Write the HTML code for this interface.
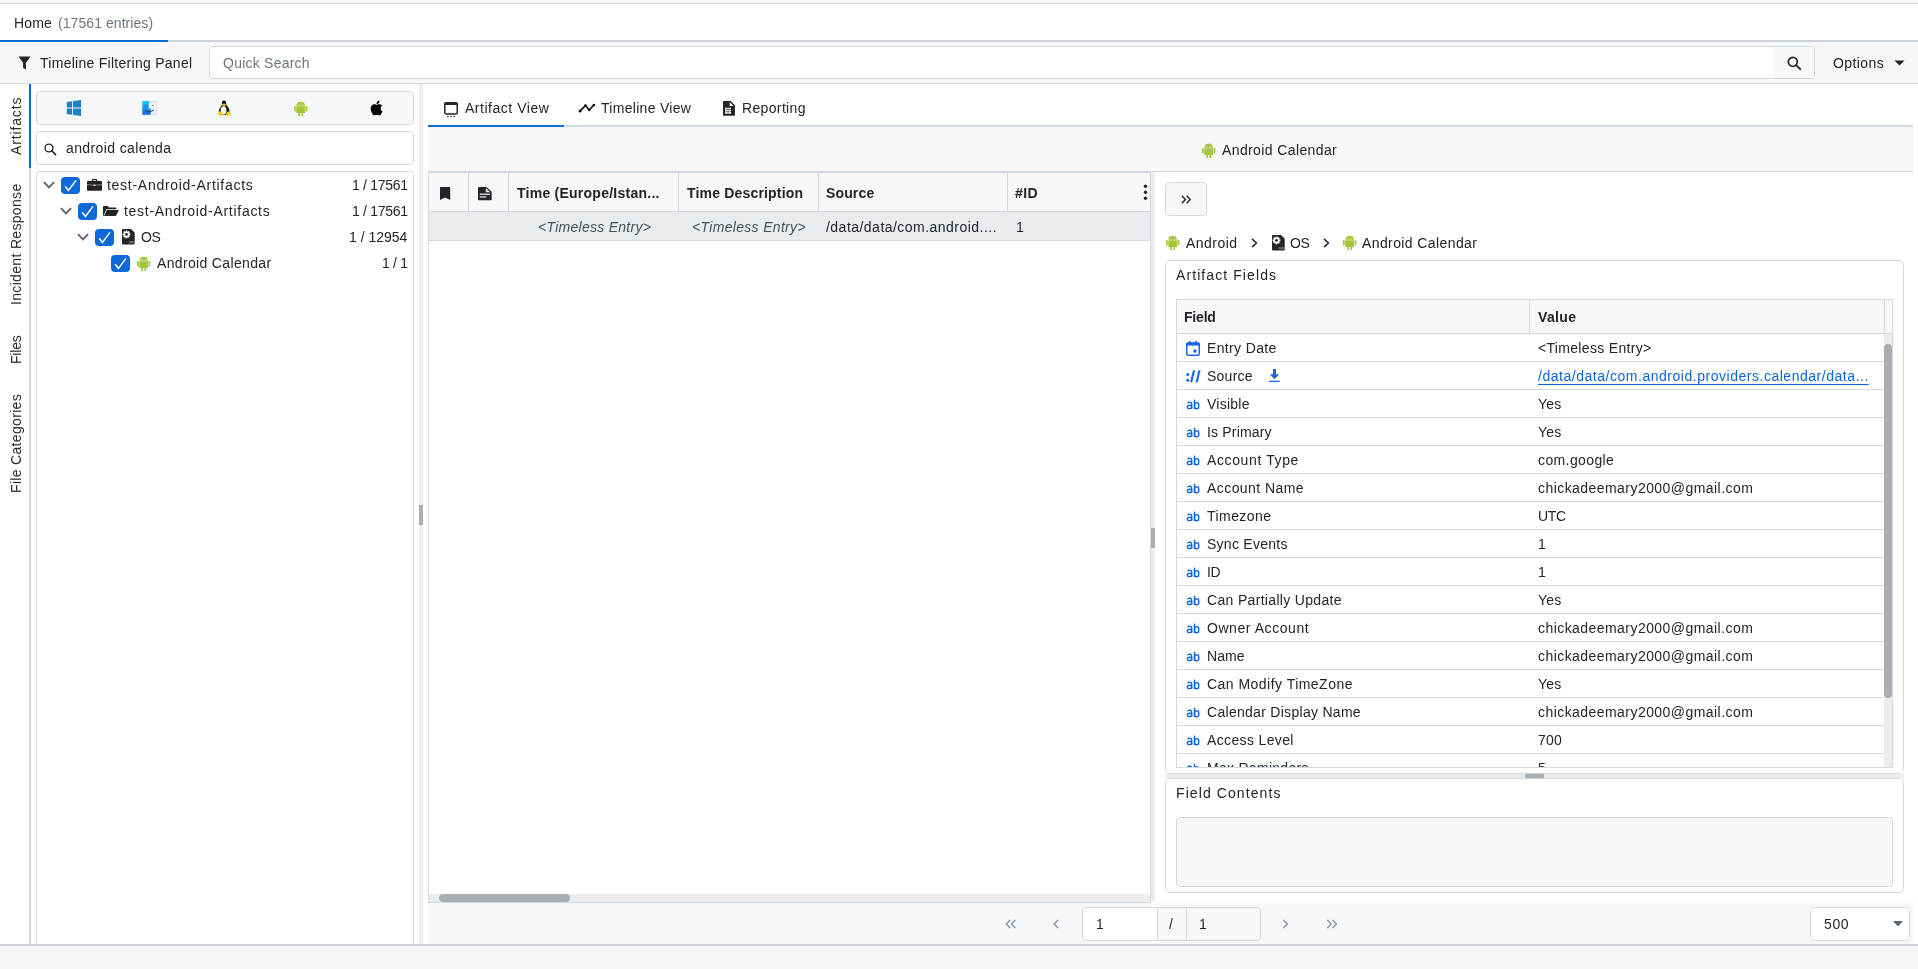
<!DOCTYPE html>
<html><head><meta charset="utf-8"><style>
html,body{margin:0;padding:0;}
body{width:1918px;height:969px;overflow:hidden;position:relative;font-family:"Liberation Sans",sans-serif;background:#f6f7f9;}
.r{position:absolute;}
.t{position:absolute;white-space:nowrap;will-change:transform;}
svg.r{overflow:visible;}
</style></head><body>
<div class="r" style="left:0px;top:0px;width:1918px;height:969px;background:#f6f7f9;"></div>
<div class="r" style="left:0px;top:3px;width:1918px;height:1px;background:#d3d9e0;"></div>
<div class="r" style="left:0px;top:4px;width:1918px;height:36px;background:#fff;"></div>
<div class="r" style="left:0px;top:40px;width:1918px;height:2px;background:#ccd3db;"></div>
<div class="r" style="left:0px;top:40px;width:168px;height:2px;background:#0c69db;"></div>
<div class="t" style="left:13.50px;top:15.40px;font-size:14px;line-height:17.5px;color:#212529;letter-spacing:0.167px;">Home</div>
<div class="t" style="left:58.20px;top:15.40px;font-size:14px;line-height:17.5px;color:#6c757d;letter-spacing:0.064px;">(17561 entries)</div>
<div class="r" style="left:0px;top:42px;width:1918px;height:41px;background:#f6f7f9;"></div>
<div class="r" style="left:0px;top:83px;width:1918px;height:1px;background:#d3d9e0;"></div>
<svg class="r" style="left:18px;top:56px" width="13" height="14" viewBox="0 0 13 14"><path d="M0.5 0.5h12l-4.6 6.2v6.8l-2.8-1.6v-5.2z" fill="#212529"/></svg>
<div class="t" style="left:40.00px;top:55.40px;font-size:14px;line-height:17.5px;color:#212529;letter-spacing:0.274px;">Timeline Filtering Panel</div>
<div class="r" style="left:209px;top:46px;width:1606px;height:33px;background:#fff;border:1px solid #d3d9e0;border-radius:4px;box-sizing:border-box;"></div>
<div class="r" style="left:1774px;top:47px;width:40px;height:31px;background:#f6f7f9;border-radius:0 3px 3px 0;"></div>
<div class="t" style="left:222.50px;top:55.40px;font-size:14px;line-height:17.5px;color:#6c757d;letter-spacing:0.236px;">Quick Search</div>
<svg class="r" style="left:1787px;top:56px" width="15" height="14" viewBox="0 0 15 14"><circle cx="5.8" cy="5.8" r="4.5" fill="none" stroke="#212529" stroke-width="1.7"/><path d="M9.1 9.1l4.1 4.1" stroke="#212529" stroke-width="1.9" stroke-linecap="round"/></svg>
<div class="t" style="left:1832.80px;top:55.40px;font-size:14px;line-height:17.5px;color:#212529;letter-spacing:0.400px;">Options</div>
<svg class="r" style="left:1894px;top:60px" width="11" height="6" viewBox="0 0 11 6"><path d="M0.5 0.5h10l-5 5z" fill="#212529"/></svg>
<div class="r" style="left:0px;top:84px;width:29px;height:860px;background:#fff;"></div>
<div class="r" style="left:29px;top:84px;width:2px;height:860px;background:#ced4da;"></div>
<div class="r" style="left:29px;top:84px;width:2px;height:84px;background:#0c69db;"></div>
<div class="t" style="left:7.70px;top:154.50px;font-size:14px;line-height:17.5px;color:#2a2e33;transform:rotate(-90deg);transform-origin:0 0;letter-spacing:0.862px;">Artifacts</div>
<div class="t" style="left:7.70px;top:305.00px;font-size:14px;line-height:17.5px;color:#2a2e33;transform:rotate(-90deg);transform-origin:0 0;letter-spacing:0.328px;">Incident Response</div>
<div class="t" style="left:7.70px;top:363.75px;font-size:14px;line-height:17.5px;color:#2a2e33;transform:rotate(-90deg);transform-origin:0 0;letter-spacing:-0.213px;">Files</div>
<div class="t" style="left:7.70px;top:492.50px;font-size:14px;line-height:17.5px;color:#2a2e33;transform:rotate(-90deg);transform-origin:0 0;letter-spacing:0.325px;">File Categories</div>
<div class="r" style="left:31px;top:84px;width:388px;height:860px;background:#fff;"></div>
<div class="r" style="left:36px;top:91px;width:378px;height:34px;background:#f6f7f9;border:1px solid #d3d9e0;border-radius:4px;box-sizing:border-box;"></div>
<div class="r" style="left:36px;top:131px;width:378px;height:34px;background:#fff;border:1px solid #d3d9e0;border-radius:4px;box-sizing:border-box;"></div>
<svg class="r" style="left:44px;top:143px" width="13" height="12" viewBox="0 0 13 12"><circle cx="5" cy="5" r="3.9" fill="none" stroke="#212529" stroke-width="1.4"/><path d="M7.8 7.8l3.8 3.8" stroke="#212529" stroke-width="1.6" stroke-linecap="round"/></svg>
<div class="t" style="left:65.50px;top:139.90px;font-size:14px;line-height:17.5px;color:#212529;letter-spacing:0.386px;">android calenda</div>
<div class="r" style="left:36px;top:171px;width:378px;height:774px;background:#fff;border:1px solid #d3d9e0;border-bottom:none;border-radius:4px 4px 0 0;box-sizing:border-box;"></div>
<div class="r" style="left:419px;top:84px;width:4px;height:860px;background:#ececec;"></div>
<div class="r" style="left:414px;top:84px;width:5px;height:860px;background:#fff;"></div>
<div class="r" style="left:423px;top:84px;width:5px;height:860px;background:#fff;"></div>
<div class="r" style="left:428px;top:84px;width:1490px;height:860px;background:#fff;"></div>
<div class="r" style="left:428px;top:125px;width:1485px;height:2px;background:#d3d9e0;"></div>
<div class="r" style="left:428px;top:125px;width:136px;height:2px;background:#0c69db;"></div>
<div class="r" style="left:428px;top:127px;width:1485px;height:45px;background:#f6f7f9;"></div>
<div class="r" style="left:428px;top:171px;width:1485px;height:1px;background:#d3d9e0;"></div>
<div class="t" style="left:464.70px;top:100.40px;font-size:14px;line-height:17.5px;color:#212529;letter-spacing:0.525px;">Artifact View</div>
<div class="t" style="left:601.00px;top:100.40px;font-size:14px;line-height:17.5px;color:#212529;letter-spacing:0.292px;">Timeline View</div>
<div class="t" style="left:742.40px;top:100.40px;font-size:14px;line-height:17.5px;color:#212529;letter-spacing:0.350px;">Reporting</div>
<div class="t" style="left:1221.70px;top:142.40px;font-size:14px;line-height:17.5px;color:#212529;letter-spacing:0.387px;">Android Calendar</div>
<div class="r" style="left:428px;top:172px;width:723px;height:731px;background:#fff;border-left:1px solid #d3d9e0;border-right:1px solid #d3d9e0;box-sizing:border-box;"></div>
<div class="r" style="left:429px;top:173px;width:721px;height:39px;background:#f6f7f9;"></div>
<div class="r" style="left:428px;top:172px;width:723px;height:1px;background:#d0d6dd;"></div>
<div class="r" style="left:428px;top:211px;width:723px;height:1px;background:#d3d9e0;"></div>
<div class="r" style="left:429px;top:212px;width:721px;height:28px;background:#e9ecef;"></div>
<div class="r" style="left:428px;top:240px;width:723px;height:1px;background:#d3d9e0;"></div>
<div class="r" style="left:468px;top:172px;width:1px;height:40px;background:#d3d9e0;"></div>
<div class="r" style="left:508px;top:172px;width:1px;height:40px;background:#d3d9e0;"></div>
<div class="r" style="left:678px;top:172px;width:1px;height:40px;background:#d3d9e0;"></div>
<div class="r" style="left:818px;top:172px;width:1px;height:40px;background:#d3d9e0;"></div>
<div class="r" style="left:1007px;top:172px;width:1px;height:40px;background:#d3d9e0;"></div>
<div class="t" style="left:517.00px;top:185.40px;font-size:14px;line-height:17.5px;color:#212529;letter-spacing:0.250px;font-weight:bold;">Time (Europe/Istan...</div>
<div class="t" style="left:687.00px;top:185.40px;font-size:14px;line-height:17.5px;color:#212529;letter-spacing:0.180px;font-weight:bold;">Time Description</div>
<div class="t" style="left:826.40px;top:185.40px;font-size:14px;line-height:17.5px;color:#212529;letter-spacing:0.140px;font-weight:bold;">Source</div>
<div class="t" style="left:1015.00px;top:185.40px;font-size:14px;line-height:17.5px;color:#212529;letter-spacing:0.400px;font-weight:bold;">#ID</div>
<div class="t" style="left:537.50px;top:219.40px;font-size:14px;line-height:17.5px;color:#495057;letter-spacing:0.273px;font-style:italic;">&lt;Timeless Entry&gt;</div>
<div class="t" style="left:692.00px;top:219.40px;font-size:14px;line-height:17.5px;color:#495057;letter-spacing:0.320px;font-style:italic;">&lt;Timeless Entry&gt;</div>
<div class="t" style="left:826.40px;top:219.40px;font-size:14px;line-height:17.5px;color:#212529;letter-spacing:0.472px;">/data/data/com.android....</div>
<div class="t" style="left:1016.00px;top:219.40px;font-size:14px;line-height:17.5px;color:#212529;">1</div>
<div class="r" style="left:429px;top:894px;width:721px;height:8px;background:#ececec;"></div>
<div class="r" style="left:439px;top:894px;width:131px;height:8px;background:#a9aeb3;border-radius:4px;"></div>
<div class="r" style="left:428px;top:902px;width:723px;height:1px;background:#d3d9e0;"></div>
<div class="r" style="left:1151px;top:172px;width:4px;height:730px;background:#ececec;"></div>
<div class="r" style="left:1155px;top:172px;width:758px;height:730px;background:#fff;"></div>
<div class="r" style="left:419px;top:505px;width:4px;height:20px;background:#a9aeb3;"></div>
<div class="r" style="left:1151px;top:528px;width:4px;height:20px;background:#a9aeb3;"></div>
<div class="r" style="left:428px;top:903px;width:1486px;height:41px;background:#f6f7f9;"></div>
<div class="r" style="left:0px;top:944px;width:1918px;height:2px;background:#cfd4da;"></div>
<svg class="r" style="left:66px;top:100px" width="16" height="16" viewBox="0 0 16 16"><g fill="#1b81c2"><path d="M0.8 2.1L6.1 1.3V7.5H0.8z"/><path d="M0.8 8.5H6.1V14.8L0.8 14z"/><path d="M7.1 1.1L15.1 0V7.5H7.1z"/><path d="M7.1 8.5H15.1V16L7.1 14.9z"/></g></svg>
<svg class="r" style="left:141.5px;top:101px" width="15" height="14" viewBox="0 0 15 14"><defs><linearGradient id="fg" x1="0" y1="0" x2="0" y2="1"><stop offset="0" stop-color="#14cbfa"/><stop offset="1" stop-color="#1667ec"/></linearGradient></defs><rect x="0.5" y="0.3" width="14.2" height="13.5" rx="0.6" fill="#eef2f6" stroke="#c9cdd2" stroke-width="0.5"/><path d="M0.3 0.1H7.6C7 2 6.6 4.5 6.6 7.6H8.7V13.8H0.3z" fill="url(#fg)"/><circle cx="4.1" cy="4.3" r="0.65" fill="#1d2b3a"/><circle cx="10.8" cy="4.3" r="0.65" fill="#3a4450"/><path d="M3.2 9.4Q7.5 12.3 12 9.2" fill="none" stroke="#1d2b3a" stroke-width="0.9"/></svg>
<svg class="r" style="left:217px;top:99.5px" width="14.5" height="16.5" viewBox="0 0 14.5 16.5"><path d="M7 0.6C5.4 0.6 4.9 1.8 5 3.4C5.1 4.5 4.6 5.5 3.6 6.9C2.6 8.3 1.6 10 1.9 12.5L4 14.8H10.5L12.6 12.5C12.6 10 11.9 8.1 10.9 6.8C9.9 5.5 9.2 4.5 9.2 3.4C9.2 1.8 8.6 0.6 7 0.6z" fill="#111"/><ellipse cx="6.6" cy="10.3" rx="2.9" ry="4.1" fill="#fff"/><ellipse cx="7" cy="4.9" rx="2.0" ry="1.1" fill="#f5c400"/><path d="M0.5 13.8L2.3 11.3L4.4 12L6.1 14.6L3.6 16.1z" fill="#f5c400"/><path d="M14 13.8L12.2 11.3L10.1 12L8.4 14.6L10.9 16.1z" fill="#f5c400"/></svg>
<svg class="r" style="left:293.5px;top:100.5px" width="13.4" height="15.3" viewBox="0 0 13.4 15.3"><g fill="#a4c639"><path d="M2.3 4.7A4.4 3.9 0 0 1 11.1 4.7z"/><path d="M2.3 5.2H11.1V11.2A0.9 0.9 0 0 1 10.2 12.1H3.2A0.9 0.9 0 0 1 2.3 11.2z"/><rect x="0" y="5" width="1.75" height="5.4" rx="0.87"/><rect x="11.65" y="5" width="1.75" height="5.4" rx="0.87"/><rect x="4.3" y="10.5" width="1.7" height="4.8" rx="0.85"/><rect x="7.4" y="10.5" width="1.7" height="4.8" rx="0.85"/><path d="M3.6 0.6L4.5 1.9M9.8 0.6L8.9 1.9" stroke="#a4c639" stroke-width="0.5"/></g><circle cx="5" cy="3.3" r="0.45" fill="#fff"/><circle cx="8.4" cy="3.3" r="0.45" fill="#fff"/></svg>
<svg class="r" style="left:369px;top:100px" width="14" height="16" viewBox="0 0 14 16"><path d="M11.6 8.5C11.6 6.6 13.1 5.7 13.2 5.6C12.3 4.3 11 4.2 10.5 4.2C9.4 4.1 8.3 4.8 7.8 4.8C7.2 4.8 6.3 4.2 5.4 4.2C4.1 4.3 2.9 5 2.3 6.1C1 8.3 2 11.6 3.2 13.4C3.8 14.3 4.6 15.3 5.5 15.2C6.4 15.2 6.8 14.7 7.9 14.7C9 14.7 9.3 15.2 10.3 15.2C11.3 15.2 11.9 14.3 12.5 13.4C13.2 12.4 13.5 11.4 13.5 11.3C13.5 11.3 11.6 10.6 11.6 8.5zM9.8 2.9C10.3 2.3 10.6 1.4 10.5 0.5C9.8 0.6 8.9 1 8.4 1.6C7.9 2.1 7.5 3 7.6 3.9C8.4 4 9.3 3.5 9.8 2.9z" fill="#000"/></svg>
<svg class="r" style="left:43px;top:181px" width="12" height="8" viewBox="0 0 12 8"><path d="M0.9 1.1L6 6.3L11.1 1.1" fill="none" stroke="#5b6570" stroke-width="1.9"/></svg>
<svg class="r" style="left:61px;top:177px" width="19" height="17" viewBox="0 0 19 17"><rect x="0" y="0" width="19" height="17" rx="4" fill="#0c69db"/><path d="M4.2 9.3L7.4 13.4L15 3.4" fill="none" stroke="#fff" stroke-width="1.5"/></svg>
<svg class="r" style="left:86.5px;top:179px" width="15" height="12" viewBox="0 0 15 12"><path d="M4.8 2.2V1.1A1.1 1.1 0 0 1 5.9 0H9.1A1.1 1.1 0 0 1 10.2 1.1V2.2H9V1.2H6V2.2z" fill="#222"/><rect x="0" y="2.1" width="15" height="9.6" rx="1" fill="#222"/><path d="M0 5.6Q7.5 6.9 15 5.6" fill="none" stroke="#fff" stroke-width="0.45"/><rect x="6.6" y="5.6" width="1.8" height="1.4" fill="#ddd"/></svg>
<div class="t" style="left:106.70px;top:177.40px;font-size:14px;line-height:17.5px;color:#212529;letter-spacing:0.719px;">test-Android-Artifacts</div>
<div class="t" style="left:351.70px;top:177.40px;font-size:14px;line-height:17.5px;color:#212529;letter-spacing:-0.300px;">1 / 17561</div>
<svg class="r" style="left:60px;top:207px" width="12" height="8" viewBox="0 0 12 8"><path d="M0.9 1.1L6 6.3L11.1 1.1" fill="none" stroke="#5b6570" stroke-width="1.9"/></svg>
<svg class="r" style="left:78px;top:203px" width="19" height="17" viewBox="0 0 19 17"><rect x="0" y="0" width="19" height="17" rx="4" fill="#0c69db"/><path d="M4.2 9.3L7.4 13.4L15 3.4" fill="none" stroke="#fff" stroke-width="1.5"/></svg>
<svg class="r" style="left:103px;top:206px" width="16" height="10" viewBox="0 0 16 10"><path d="M0 1A1 1 0 0 1 1 0H4.6L6 1.4H12.4A1 1 0 0 1 13.4 2.4V3.3H3.3L0.6 9.8H0z" fill="#222"/><path d="M3.8 4H15.9L13.3 9.3A1 1 0 0 1 12.4 9.9H1.1z" fill="#222"/></svg>
<div class="t" style="left:123.80px;top:203.40px;font-size:14px;line-height:17.5px;color:#212529;letter-spacing:0.714px;">test-Android-Artifacts</div>
<div class="t" style="left:351.70px;top:203.40px;font-size:14px;line-height:17.5px;color:#212529;letter-spacing:-0.300px;">1 / 17561</div>
<svg class="r" style="left:77px;top:233px" width="12" height="8" viewBox="0 0 12 8"><path d="M0.9 1.1L6 6.3L11.1 1.1" fill="none" stroke="#5b6570" stroke-width="1.9"/></svg>
<svg class="r" style="left:95px;top:229px" width="19" height="17" viewBox="0 0 19 17"><rect x="0" y="0" width="19" height="17" rx="4" fill="#0c69db"/><path d="M4.2 9.3L7.4 13.4L15 3.4" fill="none" stroke="#fff" stroke-width="1.5"/></svg>
<svg class="r" style="left:122.2px;top:229px" width="12.7" height="15.6" viewBox="0 0 12.7 15.6"><path d="M0.8 0H9L12.7 3.6V14.8A0.8 0.8 0 0 1 11.9 15.6H0.8A0.8 0.8 0 0 1 0 14.8V0.8A0.8 0.8 0 0 1 0.8 0z" fill="#252525"/><g transform="translate(4.5 5.4)"><circle r="2.9" fill="#fff"/><g fill="#fff"><rect x="-0.85" y="-3.9" width="1.7" height="7.8"/><rect x="-3.9" y="-0.85" width="7.8" height="1.7"/><rect x="-0.85" y="-3.9" width="1.7" height="7.8" transform="rotate(45)"/><rect x="-0.85" y="-3.9" width="1.7" height="7.8" transform="rotate(-45)"/></g><circle r="1.4" fill="#252525"/></g><rect x="6.8" y="12" width="5.3" height="2.3" fill="#7a7a7a" opacity="0.7"/></svg>
<div class="t" style="left:140.50px;top:229.40px;font-size:14px;line-height:17.5px;color:#212529;letter-spacing:-0.300px;">OS</div>
<div class="t" style="left:349.20px;top:229.40px;font-size:14px;line-height:17.5px;color:#212529;letter-spacing:-0.012px;">1 / 12954</div>
<svg class="r" style="left:111px;top:255px" width="19" height="17" viewBox="0 0 19 17"><rect x="0" y="0" width="19" height="17" rx="4" fill="#0c69db"/><path d="M4.2 9.3L7.4 13.4L15 3.4" fill="none" stroke="#fff" stroke-width="1.5"/></svg>
<svg class="r" style="left:137.2px;top:255.6px" width="13.4" height="15.3" viewBox="0 0 13.4 15.3"><g fill="#a4c639"><path d="M2.3 4.7A4.4 3.9 0 0 1 11.1 4.7z"/><path d="M2.3 5.2H11.1V11.2A0.9 0.9 0 0 1 10.2 12.1H3.2A0.9 0.9 0 0 1 2.3 11.2z"/><rect x="0" y="5" width="1.75" height="5.4" rx="0.87"/><rect x="11.65" y="5" width="1.75" height="5.4" rx="0.87"/><rect x="4.3" y="10.5" width="1.7" height="4.8" rx="0.85"/><rect x="7.4" y="10.5" width="1.7" height="4.8" rx="0.85"/><path d="M3.6 0.6L4.5 1.9M9.8 0.6L8.9 1.9" stroke="#a4c639" stroke-width="0.5"/></g><circle cx="5" cy="3.3" r="0.45" fill="#fff"/><circle cx="8.4" cy="3.3" r="0.45" fill="#fff"/></svg>
<div class="t" style="left:156.70px;top:255.40px;font-size:14px;line-height:17.5px;color:#212529;letter-spacing:0.340px;">Android Calendar</div>
<div class="t" style="left:381.70px;top:255.40px;font-size:14px;line-height:17.5px;color:#212529;letter-spacing:-0.300px;">1 / 1</div>
<svg class="r" style="left:444px;top:102px" width="14" height="16" viewBox="0 0 14 16"><rect x="0.75" y="0.75" width="12.5" height="11.3" rx="1.6" fill="none" stroke="#212529" stroke-width="1.5"/><rect x="0.5" y="0.5" width="13" height="2.6" rx="1" fill="#212529"/><rect x="3" y="13.7" width="1.8" height="1.5" rx="0.7" fill="#444"/><rect x="6.1" y="13.7" width="1.8" height="1.5" rx="0.7" fill="#444"/><rect x="9.2" y="13.7" width="1.8" height="1.5" rx="0.7" fill="#444"/></svg>
<svg class="r" style="left:578px;top:103px" width="18" height="10" viewBox="0 0 18 10"><path d="M2 8.2L7.5 2.5L11.2 7L15.9 2" fill="none" stroke="#111" stroke-width="1.7" stroke-linecap="round" stroke-linejoin="round"/><circle cx="2" cy="8.2" r="1.35" fill="#111"/><circle cx="7.5" cy="2.6" r="1.3" fill="#111"/><circle cx="11.2" cy="7" r="1.3" fill="#111"/><circle cx="15.9" cy="2" r="1.35" fill="#111"/></svg>
<svg class="r" style="left:723px;top:100.8px" width="12" height="15" viewBox="0 0 12 15"><path d="M0.8 0H7.6L11.9 4.3V13.9A0.9 0.9 0 0 1 11 14.8H0.8A0.9 0.9 0 0 1 0 13.9V0.8A0.8 0.8 0 0 1 0.8 0z" fill="#212529"/><path d="M6.7 1.2V5.1H10.6z" fill="#fff"/><g fill="#fff"><rect x="2" y="6.8" width="2.8" height="1.6"/><rect x="5.2" y="6.8" width="2.8" height="1.6"/><rect x="2" y="9" width="2.8" height="1.5"/><rect x="5.2" y="9" width="2.8" height="1.5"/><rect x="2" y="11.1" width="2.8" height="1.6"/><rect x="5.2" y="11.1" width="2.8" height="1.6"/></g></svg>
<svg class="r" style="left:1202.3px;top:143px" width="13.4" height="15.3" viewBox="0 0 13.4 15.3"><g fill="#a4c639"><path d="M2.3 4.7A4.4 3.9 0 0 1 11.1 4.7z"/><path d="M2.3 5.2H11.1V11.2A0.9 0.9 0 0 1 10.2 12.1H3.2A0.9 0.9 0 0 1 2.3 11.2z"/><rect x="0" y="5" width="1.75" height="5.4" rx="0.87"/><rect x="11.65" y="5" width="1.75" height="5.4" rx="0.87"/><rect x="4.3" y="10.5" width="1.7" height="4.8" rx="0.85"/><rect x="7.4" y="10.5" width="1.7" height="4.8" rx="0.85"/><path d="M3.6 0.6L4.5 1.9M9.8 0.6L8.9 1.9" stroke="#a4c639" stroke-width="0.5"/></g><circle cx="5" cy="3.3" r="0.45" fill="#fff"/><circle cx="8.4" cy="3.3" r="0.45" fill="#fff"/></svg>
<svg class="r" style="left:439.8px;top:186.7px" width="10.2" height="13" viewBox="0 0 10.2 13"><path d="M0.6 0H9.6A0.6 0.6 0 0 1 10.2 0.6V13L5.1 10.6L0 13V0.6A0.6 0.6 0 0 1 0.6 0z" fill="#212529"/></svg>
<svg class="r" style="left:478.2px;top:186.5px" width="13.7" height="13.2" viewBox="0 0 13.7 13.2"><path d="M1.2 0H8.5L13.7 4.8V12A1.2 1.2 0 0 1 12.5 13.2H1.2A1.2 1.2 0 0 1 0 12V1.2A1.2 1.2 0 0 1 1.2 0z" fill="#212529"/><path d="M7.8 1V5.3H12.3z" fill="#fff" opacity="0.9"/><rect x="1.8" y="6.6" width="10.2" height="1.3" fill="#e6e8ea"/><rect x="1.8" y="9.3" width="6.6" height="1.3" fill="#e6e8ea"/></svg>
<svg class="r" style="left:1143px;top:184px" width="5" height="17" viewBox="0 0 5 17"><circle cx="2.5" cy="2.3" r="1.7" fill="#212529"/><circle cx="2.5" cy="8.3" r="1.7" fill="#212529"/><circle cx="2.5" cy="14.3" r="1.7" fill="#212529"/></svg>
<div class="r" style="left:1165px;top:182px;width:42px;height:34px;background:#f6f7f9;border:1px solid #d3d9e0;border-radius:4px;box-sizing:border-box;"></div>
<svg class="r" style="left:1180.5px;top:195px" width="11" height="9" viewBox="0 0 11 9"><path d="M0.9 0.8L4.4 4.5L0.9 8.2M5.7 0.8L9.2 4.5L5.7 8.2" fill="none" stroke="#212529" stroke-width="1.4"/></svg>
<svg class="r" style="left:1166.3px;top:235px" width="13.4" height="15.3" viewBox="0 0 13.4 15.3"><g fill="#a4c639"><path d="M2.3 4.7A4.4 3.9 0 0 1 11.1 4.7z"/><path d="M2.3 5.2H11.1V11.2A0.9 0.9 0 0 1 10.2 12.1H3.2A0.9 0.9 0 0 1 2.3 11.2z"/><rect x="0" y="5" width="1.75" height="5.4" rx="0.87"/><rect x="11.65" y="5" width="1.75" height="5.4" rx="0.87"/><rect x="4.3" y="10.5" width="1.7" height="4.8" rx="0.85"/><rect x="7.4" y="10.5" width="1.7" height="4.8" rx="0.85"/><path d="M3.6 0.6L4.5 1.9M9.8 0.6L8.9 1.9" stroke="#a4c639" stroke-width="0.5"/></g><circle cx="5" cy="3.3" r="0.45" fill="#fff"/><circle cx="8.4" cy="3.3" r="0.45" fill="#fff"/></svg>
<div class="t" style="left:1185.50px;top:235.40px;font-size:14px;line-height:17.5px;color:#212529;letter-spacing:0.467px;">Android</div>
<svg class="r" style="left:1250.5px;top:238px" width="7" height="10" viewBox="0 0 7 10"><path d="M1 0.9L5.4 5L1 9.1" fill="none" stroke="#212529" stroke-width="1.5"/></svg>
<svg class="r" style="left:1272px;top:235.2px" width="12.7" height="15.6" viewBox="0 0 12.7 15.6"><path d="M0.8 0H9L12.7 3.6V14.8A0.8 0.8 0 0 1 11.9 15.6H0.8A0.8 0.8 0 0 1 0 14.8V0.8A0.8 0.8 0 0 1 0.8 0z" fill="#252525"/><g transform="translate(4.5 5.4)"><circle r="2.9" fill="#fff"/><g fill="#fff"><rect x="-0.85" y="-3.9" width="1.7" height="7.8"/><rect x="-3.9" y="-0.85" width="7.8" height="1.7"/><rect x="-0.85" y="-3.9" width="1.7" height="7.8" transform="rotate(45)"/><rect x="-0.85" y="-3.9" width="1.7" height="7.8" transform="rotate(-45)"/></g><circle r="1.4" fill="#252525"/></g><rect x="6.8" y="12" width="5.3" height="2.3" fill="#7a7a7a" opacity="0.7"/></svg>
<div class="t" style="left:1290.40px;top:235.40px;font-size:14px;line-height:17.5px;color:#212529;letter-spacing:-0.300px;">OS</div>
<svg class="r" style="left:1322.5px;top:238px" width="7" height="10" viewBox="0 0 7 10"><path d="M1 0.9L5.4 5L1 9.1" fill="none" stroke="#212529" stroke-width="1.5"/></svg>
<svg class="r" style="left:1343.3px;top:235px" width="13.4" height="15.3" viewBox="0 0 13.4 15.3"><g fill="#a4c639"><path d="M2.3 4.7A4.4 3.9 0 0 1 11.1 4.7z"/><path d="M2.3 5.2H11.1V11.2A0.9 0.9 0 0 1 10.2 12.1H3.2A0.9 0.9 0 0 1 2.3 11.2z"/><rect x="0" y="5" width="1.75" height="5.4" rx="0.87"/><rect x="11.65" y="5" width="1.75" height="5.4" rx="0.87"/><rect x="4.3" y="10.5" width="1.7" height="4.8" rx="0.85"/><rect x="7.4" y="10.5" width="1.7" height="4.8" rx="0.85"/><path d="M3.6 0.6L4.5 1.9M9.8 0.6L8.9 1.9" stroke="#a4c639" stroke-width="0.5"/></g><circle cx="5" cy="3.3" r="0.45" fill="#fff"/><circle cx="8.4" cy="3.3" r="0.45" fill="#fff"/></svg>
<div class="t" style="left:1362.00px;top:235.40px;font-size:14px;line-height:17.5px;color:#212529;letter-spacing:0.400px;">Android Calendar</div>
<div class="r" style="left:1165px;top:260px;width:739px;height:514px;background:#fff;border:1px solid #d3d9e0;border-radius:5px;box-sizing:border-box;"></div>
<div class="t" style="left:1175.50px;top:267.40px;font-size:14px;line-height:17.5px;color:#212529;letter-spacing:1.086px;">Artifact Fields</div>
<div class="r" style="left:1176px;top:299px;width:717px;height:469px;background:#fff;border:1px solid #d3d9e0;box-sizing:border-box;"></div>
<div class="r" style="left:1177px;top:300px;width:715px;height:33px;background:#f6f7f9;"></div>
<div class="r" style="left:1176px;top:333px;width:717px;height:1px;background:#d3d9e0;"></div>
<div class="r" style="left:1529px;top:300px;width:1px;height:33px;background:#d3d9e0;"></div>
<div class="r" style="left:1884px;top:300px;width:1px;height:33px;background:#d3d9e0;"></div>
<div class="t" style="left:1184.40px;top:309.40px;font-size:14px;line-height:17.5px;color:#212529;letter-spacing:-0.200px;font-weight:bold;">Field</div>
<div class="t" style="left:1538.00px;top:309.40px;font-size:14px;line-height:17.5px;color:#212529;letter-spacing:0.375px;font-weight:bold;">Value</div>
<div class="r" style="left:1177px;top:334px;width:707px;height:433px;overflow:hidden;">
<div class="r" style="left:0;top:27px;width:707px;height:1px;background:#d3d9e0;"></div>
<svg class="r" style="left:9px;top:7px" width="14" height="15" viewBox="0 0 14 15"><rect x="0.75" y="1.9" width="12.5" height="12.3" rx="1.5" fill="none" stroke="#1769e0" stroke-width="1.5"/><rect x="0.5" y="1.6" width="13" height="3" fill="#1769e0"/><rect x="3" y="0" width="1.5" height="2.5" fill="#1769e0"/><rect x="9.5" y="0" width="1.5" height="2.5" fill="#1769e0"/><rect x="7.4" y="8.6" width="3.1" height="3" fill="#1769e0"/></svg>
<div class="t" style="left:29.60px;top:6.40px;font-size:14px;line-height:17.5px;color:#212529;letter-spacing:0.356px;">Entry Date</div>
<div class="t" style="left:361.00px;top:6.40px;font-size:14px;line-height:17.5px;color:#212529;letter-spacing:0.320px;">&lt;Timeless Entry&gt;</div>
<div class="r" style="left:0;top:55px;width:707px;height:1px;background:#d3d9e0;"></div>
<svg class="r" style="left:8.5px;top:36px" width="15" height="13" viewBox="0 0 15 13"><circle cx="1.7" cy="4.4" r="1.5" fill="#1769e0"/><circle cx="1.7" cy="10.3" r="1.5" fill="#1769e0"/><path d="M6.9 0.2H9.1L6.3 12.2H4.1z" fill="#1769e0"/><path d="M12.4 0.2H14.6L11.8 12.2H9.6z" fill="#1769e0"/></svg>
<svg class="r" style="left:91.5px;top:35.30000000000001px" width="11" height="13" viewBox="0 0 11 13"><path d="M4 0H7V5.3H10.2L5.5 10.2L0.8 5.3H4z" fill="#1769e0"/><rect x="0" y="11.7" width="10.7" height="1.3" fill="#1769e0"/></svg>
<div class="t" style="left:29.60px;top:34.40px;font-size:14px;line-height:17.5px;color:#212529;letter-spacing:0.240px;">Source</div>
<div class="t" style="left:360.50px;top:34.40px;font-size:14px;line-height:17.5px;color:#0d63d6;letter-spacing:0.525px;text-decoration:underline;text-underline-offset:3px;">/data/data/com.android.providers.calendar/data...</div>
<div class="r" style="left:0;top:83px;width:707px;height:1px;background:#d3d9e0;"></div>
<svg class="r" style="left:9px;top:65.2px" width="14" height="11" viewBox="0 0 14 11"><g fill="none" stroke="#1769e0" stroke-width="1.45"><path d="M1.5 3.9C2.3 3.3 3.4 3.1 4.3 3.3C5.2 3.5 5.6 4.2 5.6 5.1V9.9"/><ellipse cx="3.5" cy="7.9" rx="2.1" ry="1.7"/><path d="M8.5 0.6V9.9"/><rect x="8.5" y="3.8" width="4.2" height="5.9" rx="2"/></g></svg>
<div class="t" style="left:29.60px;top:62.40px;font-size:14px;line-height:17.5px;color:#212529;letter-spacing:0.250px;">Visible</div>
<div class="t" style="left:361.00px;top:62.40px;font-size:14px;line-height:17.5px;color:#212529;letter-spacing:0.250px;">Yes</div>
<div class="r" style="left:0;top:111px;width:707px;height:1px;background:#d3d9e0;"></div>
<svg class="r" style="left:9px;top:93.2px" width="14" height="11" viewBox="0 0 14 11"><g fill="none" stroke="#1769e0" stroke-width="1.45"><path d="M1.5 3.9C2.3 3.3 3.4 3.1 4.3 3.3C5.2 3.5 5.6 4.2 5.6 5.1V9.9"/><ellipse cx="3.5" cy="7.9" rx="2.1" ry="1.7"/><path d="M8.5 0.6V9.9"/><rect x="8.5" y="3.8" width="4.2" height="5.9" rx="2"/></g></svg>
<div class="t" style="left:29.60px;top:90.40px;font-size:14px;line-height:17.5px;color:#212529;letter-spacing:0.178px;">Is Primary</div>
<div class="t" style="left:361.00px;top:90.40px;font-size:14px;line-height:17.5px;color:#212529;letter-spacing:0.250px;">Yes</div>
<div class="r" style="left:0;top:139px;width:707px;height:1px;background:#d3d9e0;"></div>
<svg class="r" style="left:9px;top:121.2px" width="14" height="11" viewBox="0 0 14 11"><g fill="none" stroke="#1769e0" stroke-width="1.45"><path d="M1.5 3.9C2.3 3.3 3.4 3.1 4.3 3.3C5.2 3.5 5.6 4.2 5.6 5.1V9.9"/><ellipse cx="3.5" cy="7.9" rx="2.1" ry="1.7"/><path d="M8.5 0.6V9.9"/><rect x="8.5" y="3.8" width="4.2" height="5.9" rx="2"/></g></svg>
<div class="t" style="left:29.60px;top:118.40px;font-size:14px;line-height:17.5px;color:#212529;letter-spacing:0.618px;">Account Type</div>
<div class="t" style="left:361.00px;top:118.40px;font-size:14px;line-height:17.5px;color:#212529;letter-spacing:0.389px;">com.google</div>
<div class="r" style="left:0;top:167px;width:707px;height:1px;background:#d3d9e0;"></div>
<svg class="r" style="left:9px;top:149.2px" width="14" height="11" viewBox="0 0 14 11"><g fill="none" stroke="#1769e0" stroke-width="1.45"><path d="M1.5 3.9C2.3 3.3 3.4 3.1 4.3 3.3C5.2 3.5 5.6 4.2 5.6 5.1V9.9"/><ellipse cx="3.5" cy="7.9" rx="2.1" ry="1.7"/><path d="M8.5 0.6V9.9"/><rect x="8.5" y="3.8" width="4.2" height="5.9" rx="2"/></g></svg>
<div class="t" style="left:29.60px;top:146.40px;font-size:14px;line-height:17.5px;color:#212529;letter-spacing:0.436px;">Account Name</div>
<div class="t" style="left:361.00px;top:146.40px;font-size:14px;line-height:17.5px;color:#212529;letter-spacing:0.442px;">chickadeemary2000@gmail.com</div>
<div class="r" style="left:0;top:195px;width:707px;height:1px;background:#d3d9e0;"></div>
<svg class="r" style="left:9px;top:177.2px" width="14" height="11" viewBox="0 0 14 11"><g fill="none" stroke="#1769e0" stroke-width="1.45"><path d="M1.5 3.9C2.3 3.3 3.4 3.1 4.3 3.3C5.2 3.5 5.6 4.2 5.6 5.1V9.9"/><ellipse cx="3.5" cy="7.9" rx="2.1" ry="1.7"/><path d="M8.5 0.6V9.9"/><rect x="8.5" y="3.8" width="4.2" height="5.9" rx="2"/></g></svg>
<div class="t" style="left:29.60px;top:174.40px;font-size:14px;line-height:17.5px;color:#212529;letter-spacing:0.443px;">Timezone</div>
<div class="t" style="left:361.00px;top:174.40px;font-size:14px;line-height:17.5px;color:#212529;letter-spacing:-0.300px;">UTC</div>
<div class="r" style="left:0;top:223px;width:707px;height:1px;background:#d3d9e0;"></div>
<svg class="r" style="left:9px;top:205.2px" width="14" height="11" viewBox="0 0 14 11"><g fill="none" stroke="#1769e0" stroke-width="1.45"><path d="M1.5 3.9C2.3 3.3 3.4 3.1 4.3 3.3C5.2 3.5 5.6 4.2 5.6 5.1V9.9"/><ellipse cx="3.5" cy="7.9" rx="2.1" ry="1.7"/><path d="M8.5 0.6V9.9"/><rect x="8.5" y="3.8" width="4.2" height="5.9" rx="2"/></g></svg>
<div class="t" style="left:29.60px;top:202.40px;font-size:14px;line-height:17.5px;color:#212529;letter-spacing:0.260px;">Sync Events</div>
<div class="t" style="left:361.00px;top:202.40px;font-size:14px;line-height:17.5px;color:#212529;">1</div>
<div class="r" style="left:0;top:251px;width:707px;height:1px;background:#d3d9e0;"></div>
<svg class="r" style="left:9px;top:233.2px" width="14" height="11" viewBox="0 0 14 11"><g fill="none" stroke="#1769e0" stroke-width="1.45"><path d="M1.5 3.9C2.3 3.3 3.4 3.1 4.3 3.3C5.2 3.5 5.6 4.2 5.6 5.1V9.9"/><ellipse cx="3.5" cy="7.9" rx="2.1" ry="1.7"/><path d="M8.5 0.6V9.9"/><rect x="8.5" y="3.8" width="4.2" height="5.9" rx="2"/></g></svg>
<div class="t" style="left:29.60px;top:230.40px;font-size:14px;line-height:17.5px;color:#212529;letter-spacing:-0.300px;">ID</div>
<div class="t" style="left:361.00px;top:230.40px;font-size:14px;line-height:17.5px;color:#212529;">1</div>
<div class="r" style="left:0;top:279px;width:707px;height:1px;background:#d3d9e0;"></div>
<svg class="r" style="left:9px;top:261.2px" width="14" height="11" viewBox="0 0 14 11"><g fill="none" stroke="#1769e0" stroke-width="1.45"><path d="M1.5 3.9C2.3 3.3 3.4 3.1 4.3 3.3C5.2 3.5 5.6 4.2 5.6 5.1V9.9"/><ellipse cx="3.5" cy="7.9" rx="2.1" ry="1.7"/><path d="M8.5 0.6V9.9"/><rect x="8.5" y="3.8" width="4.2" height="5.9" rx="2"/></g></svg>
<div class="t" style="left:29.60px;top:258.40px;font-size:14px;line-height:17.5px;color:#212529;letter-spacing:0.326px;">Can Partially Update</div>
<div class="t" style="left:361.00px;top:258.40px;font-size:14px;line-height:17.5px;color:#212529;letter-spacing:0.250px;">Yes</div>
<div class="r" style="left:0;top:307px;width:707px;height:1px;background:#d3d9e0;"></div>
<svg class="r" style="left:9px;top:289.2px" width="14" height="11" viewBox="0 0 14 11"><g fill="none" stroke="#1769e0" stroke-width="1.45"><path d="M1.5 3.9C2.3 3.3 3.4 3.1 4.3 3.3C5.2 3.5 5.6 4.2 5.6 5.1V9.9"/><ellipse cx="3.5" cy="7.9" rx="2.1" ry="1.7"/><path d="M8.5 0.6V9.9"/><rect x="8.5" y="3.8" width="4.2" height="5.9" rx="2"/></g></svg>
<div class="t" style="left:29.60px;top:286.40px;font-size:14px;line-height:17.5px;color:#212529;letter-spacing:0.558px;">Owner Account</div>
<div class="t" style="left:361.00px;top:286.40px;font-size:14px;line-height:17.5px;color:#212529;letter-spacing:0.442px;">chickadeemary2000@gmail.com</div>
<div class="r" style="left:0;top:335px;width:707px;height:1px;background:#d3d9e0;"></div>
<svg class="r" style="left:9px;top:317.2px" width="14" height="11" viewBox="0 0 14 11"><g fill="none" stroke="#1769e0" stroke-width="1.45"><path d="M1.5 3.9C2.3 3.3 3.4 3.1 4.3 3.3C5.2 3.5 5.6 4.2 5.6 5.1V9.9"/><ellipse cx="3.5" cy="7.9" rx="2.1" ry="1.7"/><path d="M8.5 0.6V9.9"/><rect x="8.5" y="3.8" width="4.2" height="5.9" rx="2"/></g></svg>
<div class="t" style="left:29.60px;top:314.40px;font-size:14px;line-height:17.5px;color:#212529;letter-spacing:0.067px;">Name</div>
<div class="t" style="left:361.00px;top:314.40px;font-size:14px;line-height:17.5px;color:#212529;letter-spacing:0.442px;">chickadeemary2000@gmail.com</div>
<div class="r" style="left:0;top:363px;width:707px;height:1px;background:#d3d9e0;"></div>
<svg class="r" style="left:9px;top:345.2px" width="14" height="11" viewBox="0 0 14 11"><g fill="none" stroke="#1769e0" stroke-width="1.45"><path d="M1.5 3.9C2.3 3.3 3.4 3.1 4.3 3.3C5.2 3.5 5.6 4.2 5.6 5.1V9.9"/><ellipse cx="3.5" cy="7.9" rx="2.1" ry="1.7"/><path d="M8.5 0.6V9.9"/><rect x="8.5" y="3.8" width="4.2" height="5.9" rx="2"/></g></svg>
<div class="t" style="left:29.60px;top:342.40px;font-size:14px;line-height:17.5px;color:#212529;letter-spacing:0.472px;">Can Modify TimeZone</div>
<div class="t" style="left:361.00px;top:342.40px;font-size:14px;line-height:17.5px;color:#212529;letter-spacing:0.250px;">Yes</div>
<div class="r" style="left:0;top:391px;width:707px;height:1px;background:#d3d9e0;"></div>
<svg class="r" style="left:9px;top:373.2px" width="14" height="11" viewBox="0 0 14 11"><g fill="none" stroke="#1769e0" stroke-width="1.45"><path d="M1.5 3.9C2.3 3.3 3.4 3.1 4.3 3.3C5.2 3.5 5.6 4.2 5.6 5.1V9.9"/><ellipse cx="3.5" cy="7.9" rx="2.1" ry="1.7"/><path d="M8.5 0.6V9.9"/><rect x="8.5" y="3.8" width="4.2" height="5.9" rx="2"/></g></svg>
<div class="t" style="left:29.60px;top:370.40px;font-size:14px;line-height:17.5px;color:#212529;letter-spacing:0.290px;">Calendar Display Name</div>
<div class="t" style="left:361.00px;top:370.40px;font-size:14px;line-height:17.5px;color:#212529;letter-spacing:0.442px;">chickadeemary2000@gmail.com</div>
<div class="r" style="left:0;top:419px;width:707px;height:1px;background:#d3d9e0;"></div>
<svg class="r" style="left:9px;top:401.2px" width="14" height="11" viewBox="0 0 14 11"><g fill="none" stroke="#1769e0" stroke-width="1.45"><path d="M1.5 3.9C2.3 3.3 3.4 3.1 4.3 3.3C5.2 3.5 5.6 4.2 5.6 5.1V9.9"/><ellipse cx="3.5" cy="7.9" rx="2.1" ry="1.7"/><path d="M8.5 0.6V9.9"/><rect x="8.5" y="3.8" width="4.2" height="5.9" rx="2"/></g></svg>
<div class="t" style="left:29.60px;top:398.40px;font-size:14px;line-height:17.5px;color:#212529;letter-spacing:0.355px;">Access Level</div>
<div class="t" style="left:361.00px;top:398.40px;font-size:14px;line-height:17.5px;color:#212529;letter-spacing:0.200px;">700</div>
<div class="r" style="left:0;top:447px;width:707px;height:1px;background:#d3d9e0;"></div>
<svg class="r" style="left:9px;top:429.2px" width="14" height="11" viewBox="0 0 14 11"><g fill="none" stroke="#1769e0" stroke-width="1.45"><path d="M1.5 3.9C2.3 3.3 3.4 3.1 4.3 3.3C5.2 3.5 5.6 4.2 5.6 5.1V9.9"/><ellipse cx="3.5" cy="7.9" rx="2.1" ry="1.7"/><path d="M8.5 0.6V9.9"/><rect x="8.5" y="3.8" width="4.2" height="5.9" rx="2"/></g></svg>
<div class="t" style="left:29.60px;top:426.40px;font-size:14px;line-height:17.5px;color:#212529;letter-spacing:0.283px;">Max Reminders</div>
<div class="t" style="left:361.00px;top:426.40px;font-size:14px;line-height:17.5px;color:#212529;">5</div>
</div>
<div class="r" style="left:1884px;top:334px;width:8px;height:433px;background:#ececec;"></div>
<div class="r" style="left:1884px;top:344px;width:8px;height:354px;background:#a9aeb3;border-radius:4px;"></div>
<div class="r" style="left:1165px;top:774px;width:739px;height:4px;background:#ececec;"></div>
<div class="r" style="left:1525px;top:774px;width:19px;height:4px;background:#a9aeb3;"></div>
<div class="r" style="left:1165px;top:778px;width:739px;height:115px;background:#fff;border:1px solid #d3d9e0;border-radius:5px;box-sizing:border-box;"></div>
<div class="t" style="left:1175.80px;top:785.40px;font-size:14px;line-height:17.5px;color:#212529;letter-spacing:1.092px;">Field Contents</div>
<div class="r" style="left:1176px;top:817px;width:717px;height:70px;background:#f6f7f9;border:1px solid #d3d9e0;border-radius:4px;box-sizing:border-box;"></div>
<svg class="r" style="left:1005px;top:919px" width="12" height="10" viewBox="0 0 12 10"><path d="M5.2 1L1.3 5L5.2 9M10.4 1L6.5 5L10.4 9" fill="none" stroke="#8a939b" stroke-width="1.4"/></svg>
<svg class="r" style="left:1053px;top:919px" width="7" height="10" viewBox="0 0 7 10"><path d="M5 1L1.2 5L5 9" fill="none" stroke="#8a939b" stroke-width="1.4"/></svg>
<div class="r" style="left:1082px;top:907px;width:179px;height:34px;background:#e9ecef;border:1px solid #d3d9e0;border-radius:4px;box-sizing:border-box;"></div>
<div class="r" style="left:1083px;top:908px;width:74px;height:32px;background:#fff;border-radius:3px 0 0 3px;"></div>
<div class="r" style="left:1157px;top:908px;width:1px;height:32px;background:#d3d9e0;"></div>
<div class="r" style="left:1158px;top:908px;width:28px;height:32px;background:#f6f7f9;"></div>
<div class="r" style="left:1186px;top:908px;width:1px;height:32px;background:#d3d9e0;"></div>
<div class="r" style="left:1187px;top:908px;width:73px;height:32px;background:#f6f7f9;border-radius:0 3px 3px 0;"></div>
<div class="t" style="left:1096.00px;top:916.40px;font-size:14px;line-height:17.5px;color:#212529;">1</div>
<div class="t" style="left:1168.50px;top:916.40px;font-size:14px;line-height:17.5px;color:#212529;">/</div>
<div class="t" style="left:1199.00px;top:916.40px;font-size:14px;line-height:17.5px;color:#212529;">1</div>
<svg class="r" style="left:1282px;top:919px" width="7" height="10" viewBox="0 0 7 10"><path d="M1.5 1L5.3 5L1.5 9" fill="none" stroke="#8a939b" stroke-width="1.4"/></svg>
<svg class="r" style="left:1326px;top:919px" width="12" height="10" viewBox="0 0 12 10"><path d="M1.3 1L5.2 5L1.3 9M6.5 1L10.4 5L6.5 9" fill="none" stroke="#8a939b" stroke-width="1.4"/></svg>
<div class="r" style="left:1810px;top:907px;width:100px;height:34px;background:#fff;border:1px solid #d3d9e0;border-radius:5px;box-sizing:border-box;"></div>
<div class="t" style="left:1823.60px;top:916.40px;font-size:14px;line-height:17.5px;color:#212529;letter-spacing:0.650px;">500</div>
<svg class="r" style="left:1893px;top:920.5px" width="10" height="6" viewBox="0 0 10 6"><path d="M0 0H10L5 5.6z" fill="#5b6570"/></svg>
</body></html>
